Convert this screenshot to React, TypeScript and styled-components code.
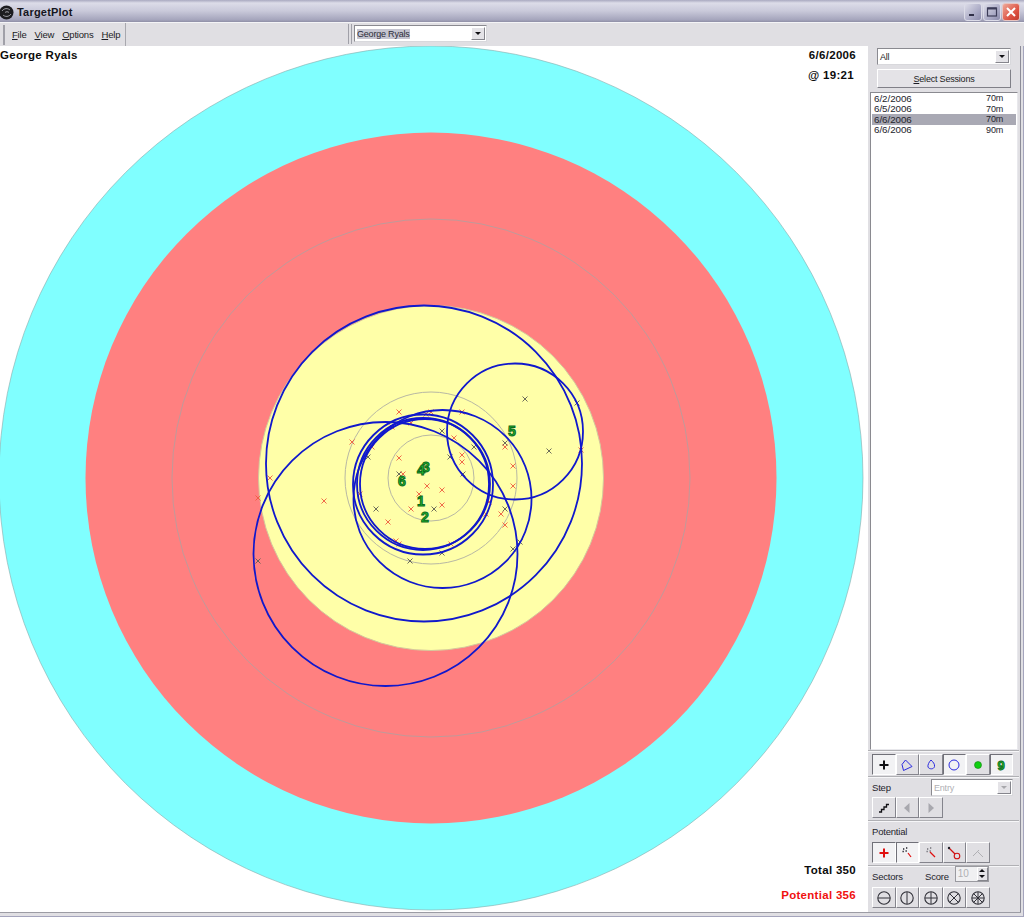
import React from 'react';
import styled, { createGlobalStyle } from 'styled-components';

const GlobalStyle = createGlobalStyle`
  html, body {
    margin: 0;
    padding: 0;
    background: #e0dfe3;
    overflow: hidden;
  }
  * { box-sizing: border-box; }
`;

const UI_FONT = `'Liberation Sans', Arial, sans-serif`;

// shot marks read off the target, [x, y]
const RED_MARKS = [
  [399, 412], [431, 412], [426, 414], [462, 412], [411, 423], [392, 427], [352, 442], [372, 447],
  [454, 438], [462, 455], [462, 462], [399, 458], [403, 474], [427, 486], [442, 490], [419, 494],
  [442, 505], [411, 509], [360, 494], [388, 522], [396, 541], [399, 544], [451, 544], [505, 447],
  [513, 466], [513, 486], [489, 502], [486, 514], [501, 514], [505, 525], [581, 450], [270, 478],
  [258, 498], [324, 501],
];
const DARK_MARKS = [
  [442, 431], [368, 457], [450, 457], [399, 474], [463, 474], [376, 509], [434, 509], [410, 561],
  [442, 553], [525, 399], [577, 403], [549, 451], [505, 443], [474, 447], [505, 509], [513, 549],
  [520, 542], [258, 561],
];
const GROUP_CIRCLES = [
  [424, 463.5, 158],
  [385.5, 554, 132],
  [515, 431.5, 68],
  [442.5, 499, 89],
  [423, 484, 66],
  [423, 484.5, 70],
  [425, 484, 65],
];
const GROUP_LABELS = [
  ['3', 426, 467], ['4', 421, 470], ['6', 402, 481], ['1', 421, 501], ['2', 425, 517], ['5', 512, 431],
];
const SESSIONS = [
  { date: '6/2/2006', dist: '70m' },
  { date: '6/5/2006', dist: '70m' },
  { date: '6/6/2006', dist: '70m', selected: true },
  { date: '6/6/2006', dist: '90m' },
];

const Window = styled.div`
  width: 1024px;
  height: 917px;
  display: flex;
  flex-direction: column;
  background: #e0dfe3;
  font-family: ${UI_FONT};
  overflow: hidden;
  box-shadow: inset -1px -1px 0 #a4a4bc;
`;

const TitleBar = styled.div`
  height: 22px;
  flex: none;
  display: flex;
  align-items: center;
  padding: 2px 4px 0 0;
  background: linear-gradient(#a9a9c0 0, #dcdce8 3px, #c9c9da 11px, #a4a4bb 20px, #8f8fa6 22px);
`;

const TitleIcon = styled.svg`
  margin-left: -1px;
  flex: none;
`;

const TitleText = styled.span`
  margin-left: 3px;
  font-size: 11px;
  font-weight: bold;
  color: #16161e;
  letter-spacing: 0.2px;
  flex: 1;
`;

const CaptionButton = styled.div<{ $close?: boolean }>`
  width: 18px;
  height: 18px;
  margin-left: 1px;
  border-radius: 3px;
  border: 1px solid ${(p) => (p.$close ? '#e8c4c0' : '#dcdce8')};
  background: ${(p) =>
    p.$close
      ? 'linear-gradient(135deg, #eea898, #dc5040 65%, #c03c30)'
      : 'linear-gradient(135deg, #dcdce8, #a8a8c4 65%, #8c8cac)'};
  display: flex;
  align-items: center;
  justify-content: center;
`;

const MenuRow = styled.div`
  height: 24px;
  flex: none;
  display: flex;
  background: #e0dfe3;
  border-top: 1px solid #f4f4f6;
`;

const Band = styled.div<{ $width: number }>`
  width: ${(p) => p.$width}px;
  display: flex;
  align-items: center;
  border-right: 1px solid #a8a8ae;
  padding-left: 3px;
`;

const Grip = styled.div<{ $gap: number }>`
  width: 4px;
  height: 20px;
  margin-right: ${(p) => p.$gap}px;
  border-left: 1px solid #a0a0a8;
  border-right: 1px solid #a0a0a8;
`;

const MenuItem = styled.span`
  font-size: 9.5px;
  letter-spacing: -0.2px;
  color: #1c1c24;
  margin-right: 8px;
  u { text-decoration: underline; }
`;

const ComboBand = styled.div`
  margin-left: 222px;
  display: flex;
  align-items: center;
  padding-bottom: 2px;
`;

const Combo = styled.div<{ $width: number; $disabled?: boolean }>`
  width: ${(p) => p.$width}px;
  height: 17px;
  display: flex;
  align-items: center;
  justify-content: space-between;
  padding: 0 1px 0 2px;
  background: #fff;
  border: 1px solid #8a8a90;
  border-right-color: #d8d8dc;
  border-bottom-color: #d8d8dc;
  font-size: 9px;
  letter-spacing: -0.2px;
  color: ${(p) => (p.$disabled ? '#b0b0b4' : '#1c1c24')};
`;

const ComboHighlight = styled.span`
  background: #c4c4d0;
  color: #2c2c38;
`;

const ComboArrow = styled.div<{ $disabled?: boolean }>`
  width: 14px;
  height: 13px;
  background: #e4e3e7;
  border: 1px solid #fff;
  border-right-color: #85858c;
  border-bottom-color: #85858c;
  display: flex;
  align-items: center;
  justify-content: center;
  &::after {
    content: '';
    border-left: 3px solid transparent;
    border-right: 3px solid transparent;
    border-top: 3px solid ${(p) => (p.$disabled ? '#a8a8ac' : '#101014')};
  }
`;

const Body = styled.div`
  flex: 1;
  display: flex;
  min-height: 0;
  border-bottom: 1px solid #9c9ca4;
  margin: 0 3px 4px 0;
`;

const Canvas = styled.div`
  position: relative;
  width: 868px;
  background: #fff;
  flex: none;
`;

const PlotSvg = styled.svg`
  display: block;
`;

const Overlay = styled.div<{ $top?: number; $left?: number; $right?: number; $bottom?: number; $red?: boolean }>`
  position: absolute;
  ${(p) => (p.$top !== undefined ? `top: ${p.$top}px;` : '')}
  ${(p) => (p.$left !== undefined ? `left: ${p.$left}px;` : '')}
  ${(p) => (p.$right !== undefined ? `right: ${p.$right}px;` : '')}
  ${(p) => (p.$bottom !== undefined ? `bottom: ${p.$bottom}px;` : '')}
  font-size: 11.5px;
  font-weight: bold;
  color: ${(p) => (p.$red ? '#f01010' : '#0c0c0c')};
  white-space: nowrap;
  letter-spacing: 0.3px;
`;

const Sidebar = styled.div`
  width: 153px;
  flex: none;
  display: flex;
  flex-direction: column;
  background: #e0dfe3;
  border-right: 1px solid #8c8c98;
  padding-right: 1px;
`;

const SessionControls = styled.div`
  display: flex;
  flex-direction: column;
  padding: 2px 0 0 9px;
  gap: 4px;
`;

const SelectButton = styled.div`
  width: 134px;
  height: 19px;
  display: flex;
  align-items: center;
  justify-content: center;
  font-size: 9px;
  letter-spacing: -0.2px;
  color: #1c1c24;
  background: #e4e3e7;
  border: 1px solid #fff;
  border-right-color: #808088;
  border-bottom-color: #808088;
`;

const SessionList = styled.div`
  flex: 1;
  margin: 4px 1px 0 2px;
  padding: 0 1px;
  background: #fff;
  border: 1px solid #8a8a90;
  border-right-color: #e8e8ec;
  border-bottom-color: #e8e8ec;
`;

const SessionRow = styled.div<{ $selected?: boolean }>`
  height: 10.5px;
  display: flex;
  justify-content: space-between;
  align-items: center;
  padding: 0 13px 0 2px;
  font-size: 9.8px;
  letter-spacing: -0.05px;
  color: #24242c;
  background: ${(p) => (p.$selected ? '#a9a9b4' : 'transparent')};
`;

const SessionDist = styled.span`
  font-size: 9px;
  letter-spacing: -0.2px;
`;

const Section = styled.div<{ $height: number; $start?: boolean }>`
  height: ${(p) => p.$height}px;
  flex: none;
  padding: ${(p) => (p.$start ? '3px 0 0 4px' : '0 0 0 4px')};
  border-top: 1px solid #b0b0b4;
  box-shadow: inset 0 1px 0 #f6f6f8;
  display: flex;
  flex-direction: column;
  justify-content: ${(p) => (p.$start ? 'flex-start' : 'space-between')};
`;

const ToolRow = styled.div<{ $bottom?: number }>`
  display: flex;
  margin-bottom: ${(p) => p.$bottom ?? 0}px;
`;

const Tool = styled.div<{ $pressed?: boolean }>`
  width: 23.5px;
  height: 21px;
  display: flex;
  align-items: center;
  justify-content: center;
  background: ${(p) => (p.$pressed ? '#f2f2f4' : '#e0dfe3')};
  border: 1px solid;
  border-color: ${(p) =>
    p.$pressed ? '#707078 #fff #fff #707078' : '#fff #84848c #84848c #fff'};
`;

const LabelRow = styled.div`
  display: flex;
  align-items: center;
  font-size: 9.5px;
  letter-spacing: -0.2px;
  color: #24242c;
  height: 20px;
  padding-top: 1px;
`;

const FieldLabel = styled.span<{ $width?: number }>`
  width: ${(p) => (p.$width ? `${p.$width}px` : 'auto')};
`;

const SpinBox = styled.div`
  width: 34px;
  height: 16px;
  margin: -6px 0 0 6px;
  display: flex;
  align-items: center;
  justify-content: space-between;
  padding-left: 2px;
  font-size: 10px;
  color: #b0b0b4;
  background: #f0f0f2;
  border: 1px solid #9a9aa0;
`;

const SpinArrows = styled.div`
  width: 11px;
  height: 14px;
  display: flex;
  flex-direction: column;
  align-items: center;
  justify-content: space-around;
  background: #e4e3e7;
  border: 1px solid #fff;
  border-right-color: #85858c;
  border-bottom-color: #85858c;
  &::before, &::after {
    content: '';
    border-left: 3px solid transparent;
    border-right: 3px solid transparent;
  }
  &::before { border-bottom: 3px solid #101014; }
  &::after { border-top: 3px solid #101014; }
`;

const Icon = ({ children }: { children: React.ReactNode }) => (
  <svg width="16" height="16" viewBox="0 0 16 16" fill="none">
    {children}
  </svg>
);

const Cross = ({ color }: { color: string }) => (
  <path d="M8 3.5v9M3.5 8h9" stroke={color} strokeWidth="2" />
);

const SectorIcon = ({ children }: { children?: React.ReactNode }) => (
  <Icon>
    <circle cx="8" cy="8" r="6.2" stroke="#303038" strokeWidth="1.1" />
    {children}
  </Icon>
);

const DotCluster = ({ color }: { color: string }) => (
  <path d="M4 4h1.3M7 3h1.3M3.5 6.5h1.3M6.5 6h1.3" stroke={color} strokeWidth="1.3" />
);

const Mark = ({ x, y, color }: { x: number; y: number; color: string }) => (
  <path d={`M${x - 2.5} ${y - 2.5}l5 5m0 -5l-5 5`} stroke={color} strokeWidth="0.9" fill="none" />
);

const Plot = () => (
  <PlotSvg width="868" height="866" viewBox="0 46 868 866">
    <circle cx="431" cy="478" r="432" fill="#80ffff" stroke="#8aa" strokeWidth="0.6" />
    <circle cx="431" cy="478" r="345.5" fill="#ff8080" />
    <circle cx="431" cy="478" r="259" fill="none" stroke="#c09a9a" strokeWidth="1" />
    <circle cx="431" cy="478" r="172.5" fill="#ffffa8" stroke="#d4c89c" strokeWidth="1" />
    <circle cx="431" cy="478" r="86" fill="none" stroke="#b8b8a4" strokeWidth="1" />
    <circle cx="431" cy="478" r="43" fill="none" stroke="#b8b8a4" strokeWidth="1" />
    {RED_MARKS.map(([x, y]) => (
      <Mark key={`r${x}-${y}`} x={x} y={y} color="#ee5a40" />
    ))}
    {DARK_MARKS.map(([x, y]) => (
      <Mark key={`d${x}-${y}`} x={x} y={y} color="#5c5c52" />
    ))}
    {GROUP_CIRCLES.map(([x, y, r]) => (
      <circle key={`${x}-${y}-${r}`} cx={x} cy={y} r={r} fill="none" stroke="#1018cc" strokeWidth="1.8" />
    ))}
    {GROUP_LABELS.map(([label, x, y]) => (
      <text
        key={label}
        x={x}
        y={Number(y) + 5}
        textAnchor="middle"
        fontFamily={UI_FONT}
        fontWeight="bold"
        fontSize="14"
        fill="#22c030"
        stroke="#0c6a1c"
        strokeWidth="1"
      >
        {label}
      </text>
    ))}
  </PlotSvg>
);

export default function App() {
  return (
    <>
      <GlobalStyle />
      <Window>
        <TitleBar>
          <TitleIcon width="15" height="15" viewBox="0 0 15 15">
            <circle cx="7.5" cy="7.5" r="7" fill="#1c1c20" />
            <path d="M3 6c2-3 6-3 8-1M4 10c2 2 6 2 8-1M6 7.5c1-1 3-1 4 0" fill="none" stroke="#9c9ca4" strokeWidth="1" />
          </TitleIcon>
          <TitleText>TargetPlot</TitleText>
          <CaptionButton>
            <svg width="10" height="10" viewBox="0 0 10 10">
              <rect x="1" y="7" width="5" height="2" fill="#303048" />
            </svg>
          </CaptionButton>
          <CaptionButton>
            <svg width="12" height="12" viewBox="0 0 12 12" fill="none">
              <rect x="1.5" y="2" width="9" height="8" stroke="#3c3c58" strokeWidth="1.2" />
              <path d="M1.5 2.5h9" stroke="#3c3c58" strokeWidth="2" />
            </svg>
          </CaptionButton>
          <CaptionButton $close>
            <svg width="12" height="12" viewBox="0 0 12 12">
              <path d="M2 2l8 8m0-8l-8 8" stroke="#fff" strokeWidth="2" />
            </svg>
          </CaptionButton>
        </TitleBar>
        <MenuRow>
          <Band $width={126}>
            <Grip $gap={7} />
            <MenuItem><u>F</u>ile</MenuItem>
            <MenuItem><u>V</u>iew</MenuItem>
            <MenuItem><u>O</u>ptions</MenuItem>
            <MenuItem><u>H</u>elp</MenuItem>
          </Band>
          <ComboBand>
            <Grip $gap={2} />
            <Combo $width={133}>
              <ComboHighlight>George Ryals</ComboHighlight>
              <ComboArrow />
            </Combo>
          </ComboBand>
        </MenuRow>
        <Body>
          <Canvas>
            <Plot />
            <Overlay $top={3} $left={0}>George Ryals</Overlay>
            <Overlay $top={3} $right={12}>6/6/2006</Overlay>
            <Overlay $top={23} $right={14}>@ 19:21</Overlay>
            <Overlay $bottom={36} $right={12}>Total 350</Overlay>
            <Overlay $bottom={11} $right={12} $red>Potential 356</Overlay>
          </Canvas>
          <Sidebar>
            <SessionControls>
              <Combo $width={134}>
                All
                <ComboArrow />
              </Combo>
              <SelectButton><span><u>S</u>elect Sessions</span></SelectButton>
            </SessionControls>
            <SessionList>
              {SESSIONS.map((s) => (
                <SessionRow key={s.date + s.dist} $selected={s.selected}>
                  <span>{s.date}</span>
                  <SessionDist>{s.dist}</SessionDist>
                </SessionRow>
              ))}
            </SessionList>
            <Section $height={26} $start>
              <ToolRow>
                <Tool $pressed><Icon><Cross color="#101014" /></Icon></Tool>
                <Tool>
                  <Icon><path d="M6.5 3L13 9.5L4.5 13.5L3 7.5Z" stroke="#2a2ae0" strokeWidth="1" /></Icon>
                </Tool>
                <Tool>
                  <Icon><path d="M8 3C10 5 12 7 11.5 9.5C11 12.5 6 12.5 5 10C4.5 8 6 5 8 3Z" stroke="#2a2ae0" strokeWidth="1" /></Icon>
                </Tool>
                <Tool $pressed>
                  <Icon><circle cx="8" cy="8" r="5" stroke="#2a2ae0" strokeWidth="1" /></Icon>
                </Tool>
                <Tool>
                  <Icon><circle cx="8" cy="8" r="3.5" fill="#10d010" stroke="#108010" strokeWidth="0.6" /></Icon>
                </Tool>
                <Tool $pressed>
                  <svg width="16" height="16" viewBox="0 0 16 16">
                    <text x="8" y="13" textAnchor="middle" fontFamily={UI_FONT} fontWeight="bold" fontSize="13" fill="#22c030" stroke="#0c6a1c" strokeWidth="0.9">9</text>
                  </svg>
                </Tool>
              </ToolRow>
            </Section>
            <Section $height={44}>
              <LabelRow>
                <FieldLabel $width={59}>Step</FieldLabel>
                <Combo $width={82} $disabled>
                  Entry
                  <ComboArrow $disabled />
                </Combo>
              </LabelRow>
              <ToolRow $bottom={2}>
                <Tool>
                  <Icon><path d="M3 12h2.5V9.5H8V7h2.5V4.5H13" stroke="#101014" strokeWidth="1.3" /></Icon>
                </Tool>
                <Tool>
                  <Icon><path d="M10.5 3L5 8l5.5 5Z" fill="#a8a8ae" /></Icon>
                </Tool>
                <Tool>
                  <Icon><path d="M5.5 3L11 8l-5.5 5Z" fill="#a8a8ae" /></Icon>
                </Tool>
              </ToolRow>
            </Section>
            <Section $height={45}>
              <LabelRow>Potential</LabelRow>
              <ToolRow $bottom={2}>
                <Tool $pressed><Icon><Cross color="#e01010" /></Icon></Tool>
                <Tool $pressed>
                  <Icon>
                    <DotCluster color="#202028" />
                    <path d="M9 8l3 4" stroke="#e01010" strokeWidth="1.2" />
                  </Icon>
                </Tool>
                <Tool>
                  <Icon>
                    <DotCluster color="#707078" />
                    <path d="M7 7l5 5" stroke="#e01010" strokeWidth="1.3" />
                  </Icon>
                </Tool>
                <Tool>
                  <Icon>
                    <path d="M3 3l6 6" stroke="#d01010" strokeWidth="1.2" />
                    <circle cx="3" cy="3" r="1.2" fill="#202028" />
                    <circle cx="11" cy="11" r="2.8" stroke="#d01010" strokeWidth="1.1" />
                  </Icon>
                </Tool>
                <Tool>
                  <Icon><path d="M3 11L9 5M8 7l5 5" stroke="#b0b0b4" strokeWidth="1" /></Icon>
                </Tool>
              </ToolRow>
            </Section>
            <Section $height={47}>
              <LabelRow>
                <FieldLabel $width={53}>Sectors</FieldLabel>
                <FieldLabel>Score</FieldLabel>
                <SpinBox>10<SpinArrows /></SpinBox>
              </LabelRow>
              <ToolRow $bottom={4}>
                <Tool><SectorIcon><path d="M2 8h12" stroke="#303038" /></SectorIcon></Tool>
                <Tool><SectorIcon><path d="M8 2v12" stroke="#303038" /></SectorIcon></Tool>
                <Tool><SectorIcon><path d="M2 8h12M8 2v12" stroke="#303038" /></SectorIcon></Tool>
                <Tool><SectorIcon><path d="M3.8 3.8l8.4 8.4M12.2 3.8l-8.4 8.4" stroke="#303038" /></SectorIcon></Tool>
                <Tool><SectorIcon><path d="M2 8h12M8 2v12M3.8 3.8l8.4 8.4M12.2 3.8l-8.4 8.4" stroke="#303038" /></SectorIcon></Tool>
              </ToolRow>
            </Section>
          </Sidebar>
        </Body>
      </Window>
    </>
  );
}
